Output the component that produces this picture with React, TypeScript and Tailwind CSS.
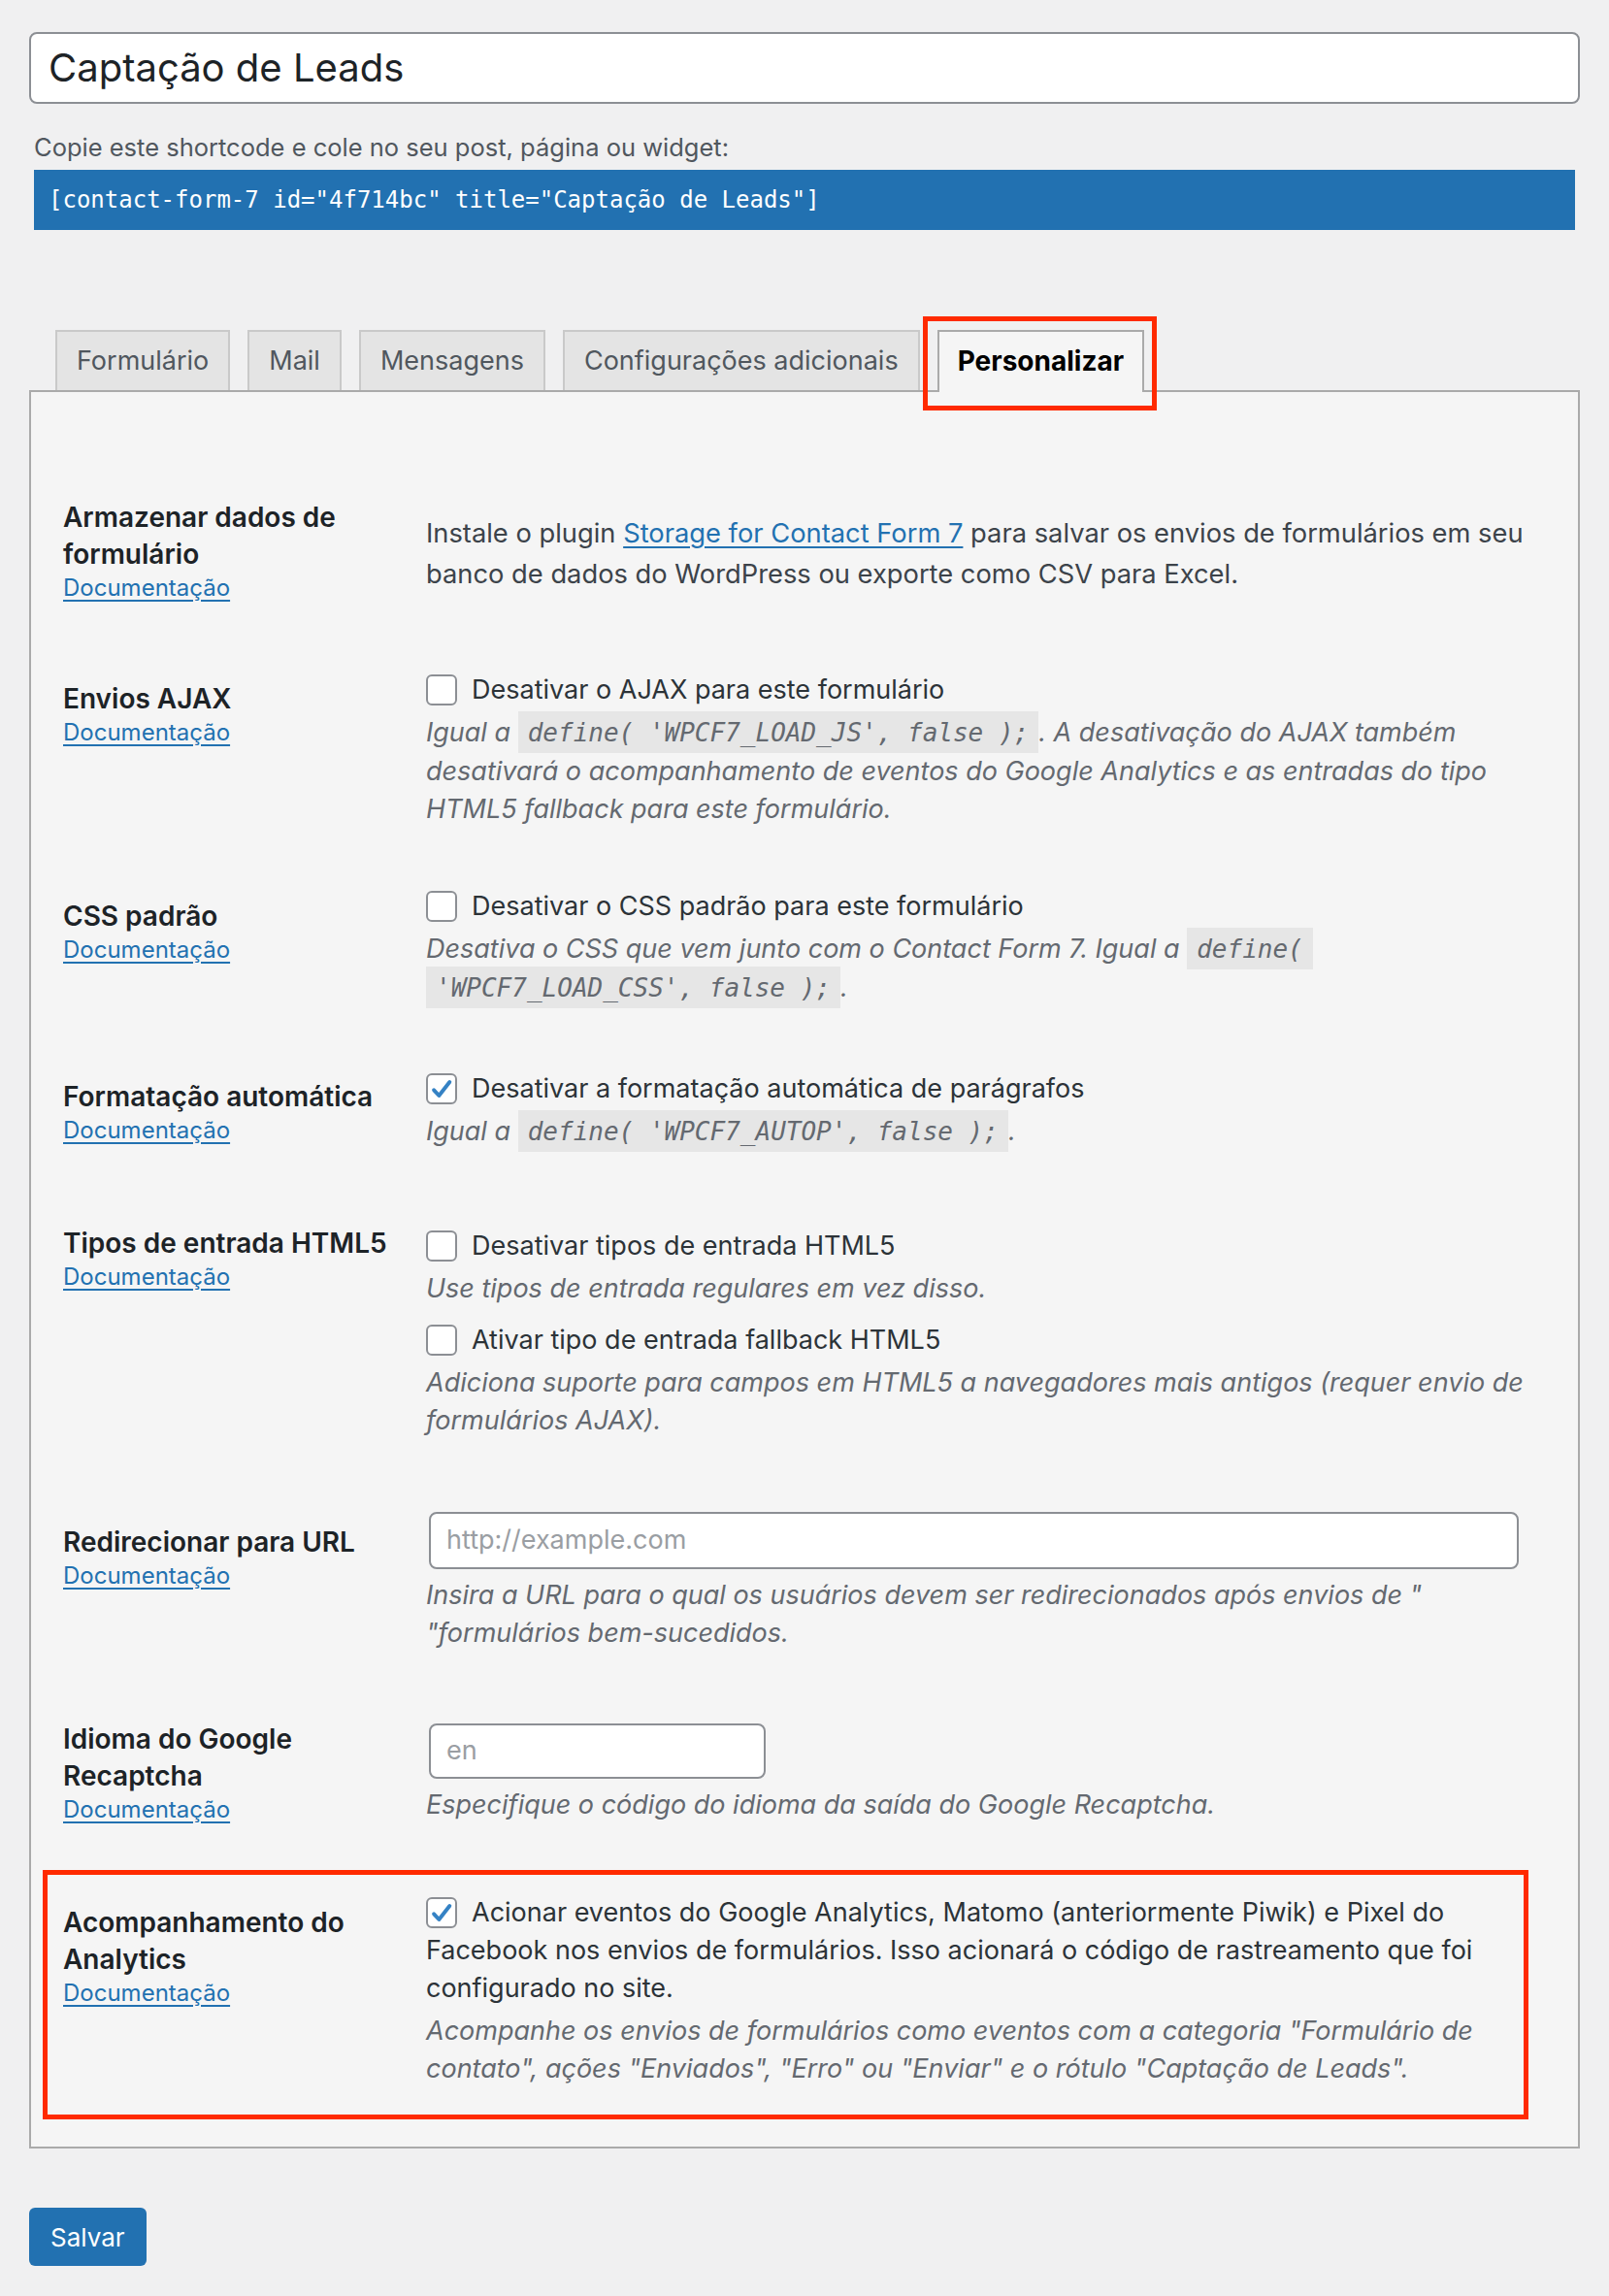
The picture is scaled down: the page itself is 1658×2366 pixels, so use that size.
import React from "react";

const Checkbox = ({ checked = false }: { checked?: boolean }) => (
  <span className="relative -top-[2px] mr-[15px] inline-flex h-[32px] w-[32px] items-center justify-center rounded-[6px] border-2 border-[#8c8f94] bg-white align-middle">
    {checked && (
      <svg viewBox="0 0 32 32" className="h-[30px] w-[30px]">
        <path
          d="M7 17.5 L13 24 L25.5 8"
          fill="none"
          stroke="#3582c4"
          strokeWidth="4.5"
          strokeLinecap="round"
          strokeLinejoin="round"
        />
      </svg>
    )}
  </span>
);

const Code = ({ children }: { children: React.ReactNode }) => (
  <code className="bg-[#e6e6e6] px-[10px] pt-[7px] pb-[6px] font-['DejaVu_Sans_Mono',monospace] text-[26px] italic">
    {children}
  </code>
);

const Doc = () => (
  <a className="block text-[24px] leading-[32px] text-[#2271b1] underline underline-offset-[4px]">
    Documentação
  </a>
);

const Label = ({ children, pt }: { children: React.ReactNode; pt: string }) => (
  <div className={`w-[374px] shrink-0 ${pt}`}>
    <div className="text-[28px] font-semibold leading-[38px] text-[#1d2327]">{children}</div>
    <Doc />
  </div>
);

const Desc = ({ children, className = "" }: { children: React.ReactNode; className?: string }) => (
  <p className={`mt-[5px] text-[27px] italic leading-[39px] text-[#646970] ${className}`}>{children}</p>
);

const CheckLine = ({ children, checked = false, className = "" }: { children: React.ReactNode; checked?: boolean; className?: string }) => (
  <p className={`text-[27px] leading-[39px] text-[#2c3338] ${className}`}>
    <Checkbox checked={checked} />
    {children}
  </p>
);

const tabs = ["Formulário", "Mail", "Mensagens", "Configurações adicionais"];

export default function App() {
  return (
    <div className="min-h-screen bg-[#f0f0f1] px-[30px] pt-[33px] pb-[33px] font-['Inter',sans-serif]">
      <div className="flex h-[74px] items-center rounded-[8px] border-2 border-[#8c8f94] bg-white px-[18px] text-[40px] text-[#1d2327]">
        Captação de Leads
      </div>
      <p className="ml-[5px] mt-[25px] text-[25.5px] leading-[39px] text-[#50575e]">
        Copie este shortcode e cole no seu post, página ou widget:
      </p>
      <div className="mx-[5px] mt-[4px] flex h-[62px] items-center bg-[#2271b1] px-[15px] font-['DejaVu_Sans_Mono',monospace] text-[24px] text-white">
        [contact-form-7 id="4f714bc" title="Captação de Leads"]
      </div>

      <div className="mt-[103px] flex items-end gap-[18px] pl-[27px]">
        {tabs.map((t) => (
          <div
            key={t}
            className="flex h-[62px] items-center border-2 border-b-0 border-[#c9c9c9] bg-[#e4e4e4] px-[20px] text-[27px] text-[#50575e]"
          >
            {t}
          </div>
        ))}
        <div className="relative z-10 -mb-[2px] flex h-[64px] items-center border-2 border-b-0 border-[#aaaaaa] bg-[#f5f5f5] px-[19px] pb-[2px] text-[28px] font-bold text-black">
          Personalizar
          <div className="pointer-events-none absolute -left-[17px] -top-[16px] h-[97px] w-[241px] border-[5px] border-[#ff2a00]" />
        </div>
      </div>

      <div className="border-2 border-[#aaaaaa] bg-[#f5f5f5] pt-[110px] pb-[28px]">
        {/* Armazenar */}
        <div className="flex pl-[33px]">
          <Label pt="pt-0">
            Armazenar dados de
            <br />
            formulário
          </Label>
          <div className="flex-1 pt-[15px] pr-[10px] text-[27.3px] leading-[42px] text-[#3c434a]">
            Instale o plugin <a className="text-[#2271b1] underline underline-offset-[4px]">Storage for Contact Form 7</a> para salvar os envios de formulários em seu
            <br />
            banco de dados do WordPress ou exporte como CSV para Excel.
          </div>
        </div>

        {/* AJAX */}
        <div className="mt-[69px] flex pl-[33px]">
          <Label pt="pt-[10px]">Envios AJAX</Label>
          <div className="flex-1 pr-[10px]">
            <CheckLine>Desativar o AJAX para este formulário</CheckLine>
            <Desc>
              Igual a <Code>define( 'WPCF7_LOAD_JS', false );</Code>. A desativação do AJAX também
              <br />
              desativará o acompanhamento de eventos do Google Analytics e as entradas do tipo
              <br />
              HTML5 fallback para este formulário.
            </Desc>
          </div>
        </div>

        {/* CSS */}
        <div className="mt-[61px] flex pl-[33px]">
          <Label pt="pt-[11px]">CSS padrão</Label>
          <div className="flex-1 pr-[10px]">
            <CheckLine>Desativar o CSS padrão para este formulário</CheckLine>
            <Desc>
              Desativa o CSS que vem junto com o Contact Form 7. Igual a <Code>define(</Code>
              <br />
              <Code>'WPCF7_LOAD_CSS', false );</Code>.
            </Desc>
          </div>
        </div>

        {/* Autop */}
        <div className="mt-[64px] flex pl-[33px]">
          <Label pt="pt-[9px]">Formatação automática</Label>
          <div className="flex-1 pr-[10px]">
            <CheckLine checked>Desativar a formatação automática de parágrafos</CheckLine>
            <Desc>
              Igual a <Code>define( 'WPCF7_AUTOP', false );</Code>.
            </Desc>
          </div>
        </div>

        {/* HTML5 */}
        <div className="mt-[76px] flex pl-[33px]">
          <Label pt="pt-0">Tipos de entrada HTML5</Label>
          <div className="flex-1 pt-[2px] pr-[10px]">
            <CheckLine>Desativar tipos de entrada HTML5</CheckLine>
            <Desc>Use tipos de entrada regulares em vez disso.</Desc>
            <CheckLine className="mt-[14px]">Ativar tipo de entrada fallback HTML5</CheckLine>
            <Desc>
              Adiciona suporte para campos em HTML5 a navegadores mais antigos (requer envio de
              <br />
              formulários AJAX).
            </Desc>
          </div>
        </div>

        {/* Redirect */}
        <div className="mt-[75px] flex pl-[33px]">
          <Label pt="pt-[12px]">Redirecionar para URL</Label>
          <div className="flex-1 pr-[10px]">
            <div className="ml-[3px] flex h-[59px] w-[1123px] items-center rounded-[8px] border-2 border-[#8c8f94] bg-white px-[16px] text-[27px] text-[#9a9ea3]">
              http://example.com
            </div>
            <Desc className="mt-[7px]">
              Insira a URL para o qual os usuários devem ser redirecionados após envios de "
              <br />
              "formulários bem-sucedidos.
            </Desc>
          </div>
        </div>

        {/* Recaptcha */}
        <div className="mt-[71px] flex pl-[33px]">
          <Label pt="pt-0">
            Idioma do Google
            <br />
            Recaptcha
          </Label>
          <div className="flex-1 pt-[3px] pr-[10px]">
            <div className="ml-[3px] flex h-[57px] w-[347px] items-center rounded-[8px] border-2 border-[#8c8f94] bg-white px-[16px] text-[27px] text-[#9a9ea3]">
              en
            </div>
            <Desc className="mt-[7px]">Especifique o código do idioma da saída do Google Recaptcha.</Desc>
          </div>
        </div>

        {/* Analytics (highlighted) */}
        <div className="ml-[12px] mr-[51px] mt-[46px] border-[5px] border-[#ff2a00] pt-[19px] pb-[28px]">
          <div className="flex pl-[16px]">
            <Label pt="pt-[11px]">
              Acompanhamento do
              <br />
              Analytics
            </Label>
            <div className="flex-1 pr-[4px]">
              <CheckLine checked>
                Acionar eventos do Google Analytics, Matomo (anteriormente Piwik) e Pixel do
                <br />
                Facebook nos envios de formulários. Isso acionará o código de rastreamento que foi
                <br />
                configurado no site.
              </CheckLine>
              <Desc>
                Acompanhe os envios de formulários como eventos com a categoria "Formulário de
                <br />
                contato", ações "Enviados", "Erro" ou "Enviar" e o rótulo "Captação de Leads".
              </Desc>
            </div>
          </div>
        </div>
      </div>

      <button className="mt-[61px] flex h-[60px] items-center rounded-[6px] bg-[#2271b1] px-[22px] text-[26px] text-white">
        Salvar
      </button>
    </div>
  );
}
